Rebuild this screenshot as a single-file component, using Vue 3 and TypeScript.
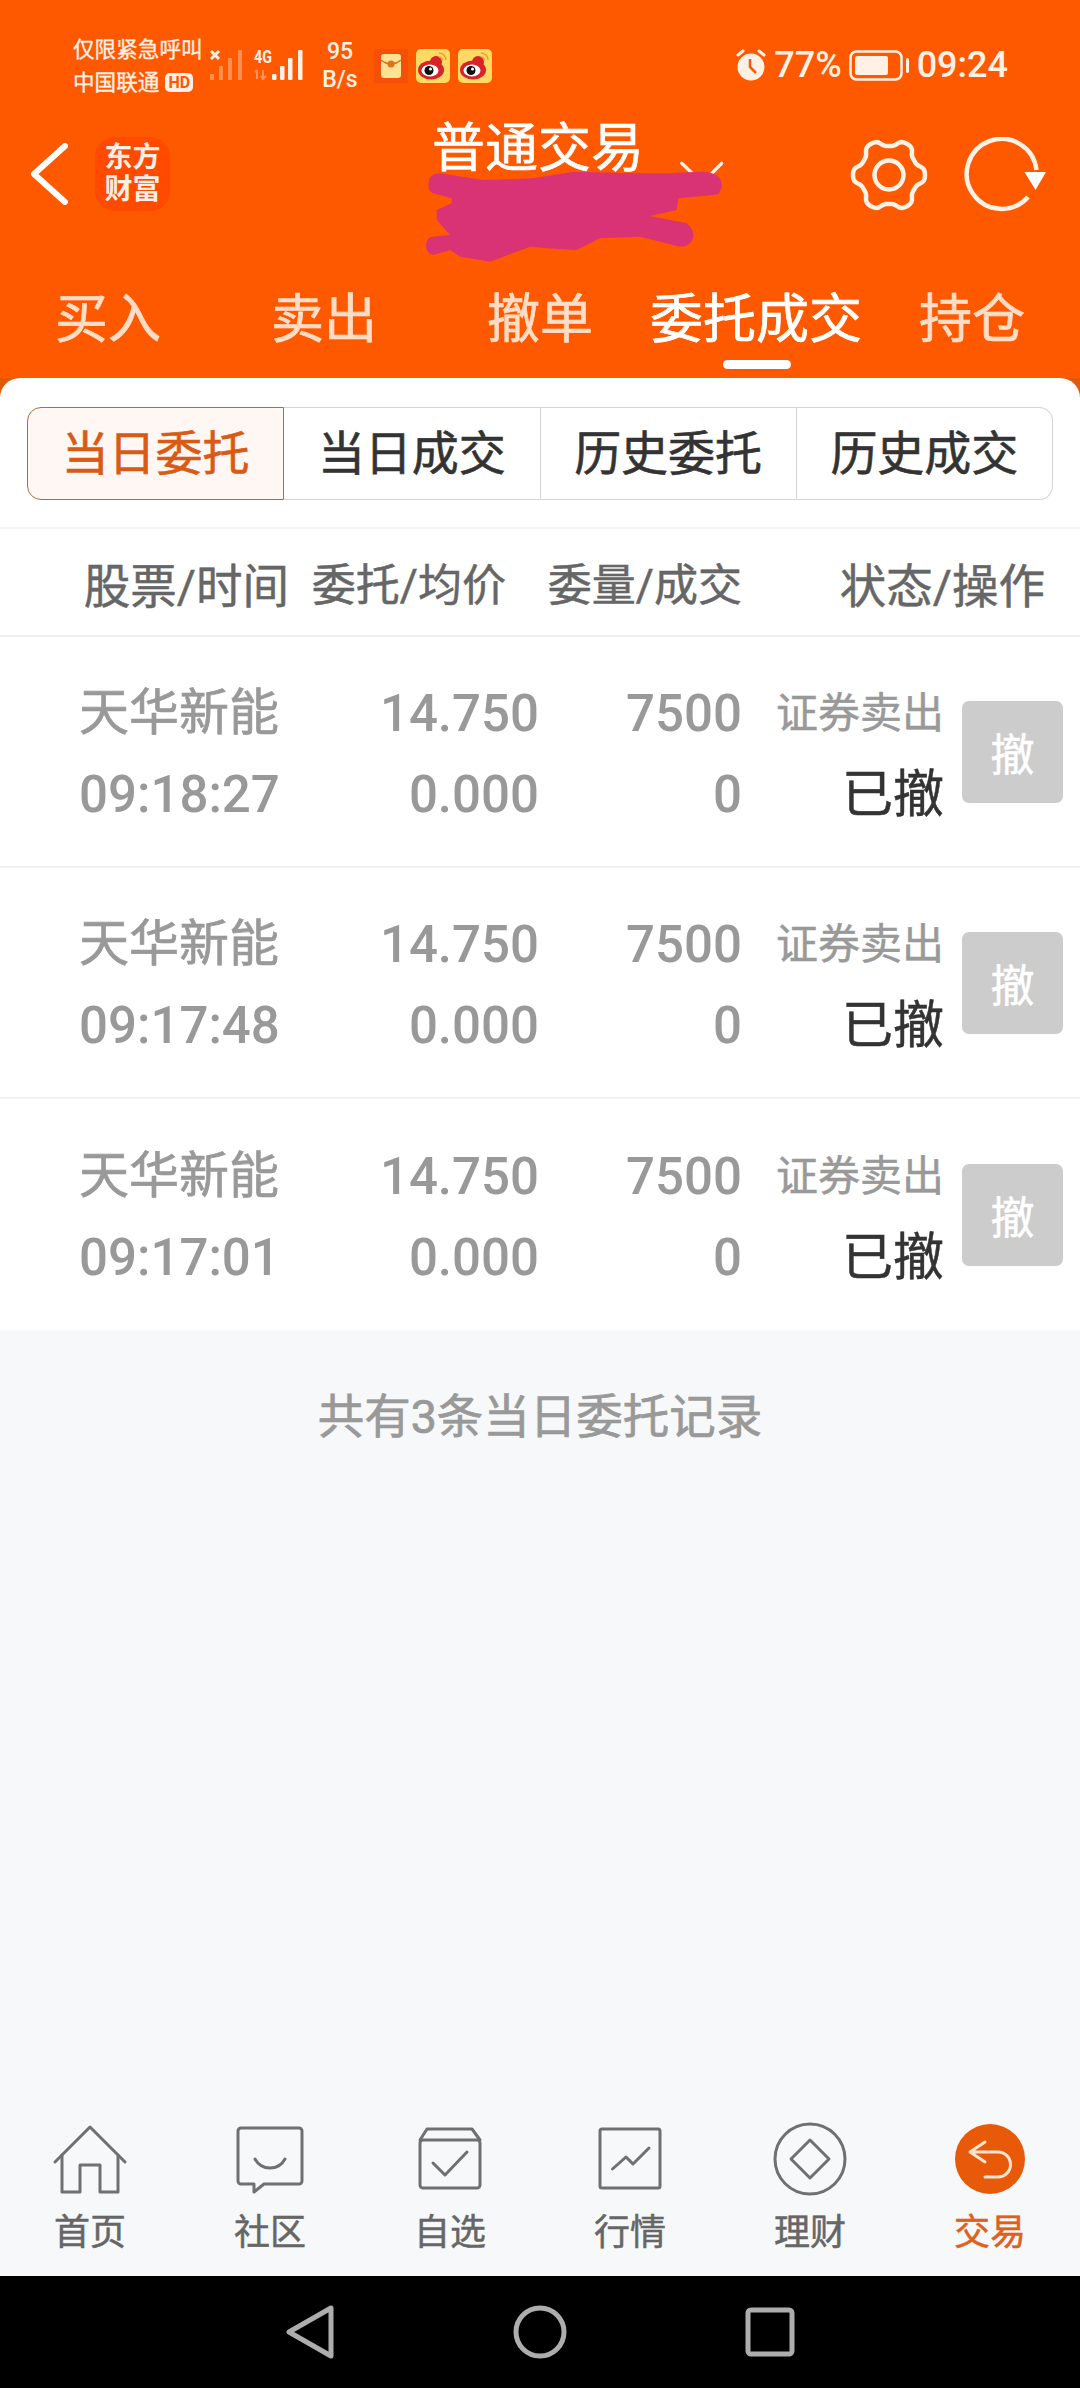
<template>
    <div class="page">
        <header class="head">
            <!-- system status bar -->
            <div class="statusbar">
                <div class="carrier">
                    <span>仅限紧急呼叫</span>
                    <span class="carrier-line">中国联通<i class="hd">HD</i></span>
                </div>
                <svg class="signal" width="94" height="32" viewBox="0 0 94 32">
                    <path class="signal-x" d="M1 2l8 8M9 2l-8 8" />
                    <g opacity="0.35">
                        <rect x="0" y="25" width="4" height="6" />
                        <rect x="9" y="17" width="4" height="14" />
                        <rect x="18" y="9" width="4" height="22" />
                        <rect x="28" y="1" width="4" height="30" />
                    </g>
                    <text x="44" y="14" font-size="18" font-weight="700" textLength="18" lengthAdjust="spacingAndGlyphs">4G</text>
                    <path opacity="0.4" class="signal-arrows" d="M47 21v9M45 23l2-2M53 21v9M51 27l2 3 3-3" />
                    <rect x="62" y="25" width="4.5" height="6" rx="1" />
                    <rect x="70" y="17" width="4.5" height="14" rx="1" />
                    <rect x="78" y="9" width="4.5" height="22" rx="1" />
                    <rect x="88" y="1" width="4.5" height="30" rx="1" />
                </svg>
                <div class="speed">
                    <span>95</span>
                    <span>B/s</span>
                </div>
                <div class="apps">
                    <svg width="34" height="34" viewBox="0 0 34 34">
                        <rect width="34" height="34" fill="#f5500a" />
                        <rect x="7" y="5" width="20" height="24" rx="3" fill="#ffe292" />
                        <path d="M7 11q10 8 20 0" fill="none" stroke="#d9691c" stroke-width="1.5" />
                        <circle cx="17" cy="15" r="3.5" fill="#e0701c" />
                    </svg>
                    <svg v-for="n in 2" :key="n" width="34" height="34" viewBox="0 0 34 34">
                        <rect width="34" height="34" rx="5" fill="#ffd964" />
                        <ellipse cx="15" cy="21" rx="13" ry="9.5" fill="#d8232a" />
                        <circle cx="20" cy="13" r="6" fill="#d8232a" />
                        <ellipse cx="14" cy="21.5" rx="8.5" ry="6" fill="#fff" />
                        <circle cx="13" cy="21.5" r="4.5" fill="#111" />
                        <circle cx="14.5" cy="20" r="1.5" fill="#fff" />
                        <path d="M23 4a7 7 0 0 1 7 7M23 8a3.5 3.5 0 0 1 3.5 3.5" fill="none" stroke="#eba52e" stroke-width="1.6" />
                    </svg>
                </div>
                <div class="status-right">
                    <svg width="30" height="32" viewBox="0 0 30 32">
                        <circle cx="15" cy="18" r="13.5" fill="#fff1e6" />
                        <path class="alarm-hand" d="M14 10v8l6 6" />
                        <path class="alarm-bell" d="M2 6l5-4M28 6l-5-4" />
                    </svg>
                    <span class="percent">77%</span>
                    <svg class="battery" width="60" height="31" viewBox="0 0 60 31">
                        <rect x="1.5" y="1.5" width="51" height="28" rx="6" fill="none" stroke="#fff1e6" stroke-width="2.5" />
                        <rect x="6" y="6" width="33" height="19" rx="2" fill="#fff1e6" />
                        <rect x="57" y="8" width="3" height="15" rx="1.5" fill="#fff1e6" />
                    </svg>
                    <span class="clock">09:24</span>
                </div>
            </div>

            <!-- title row -->
            <div class="navbar">
                <div class="nav-left">
                    <svg width="38" height="62" viewBox="0 0 38 62">
                        <path class="back" d="M35 3L4 31l31 28" />
                    </svg>
                    <div class="logo">东方<br />财富</div>
                </div>
                <div class="title">普通交易</div>
                <div class="nav-right">
                    <svg class="tool" width="80" height="76" viewBox="0 0 80 76">
                        <path :d="gearPath" />
                        <circle cx="40" cy="38" r="14.5" />
                    </svg>
                    <svg class="tool" width="90" height="76" viewBox="0 0 90 76">
                        <path d="M64 60A35 35 0 1 1 72.5 33" />
                        <path class="tool-head" d="M60.5 35H82L71.5 53z" />
                    </svg>
                </div>
                <!-- account name is painted over -->
                <svg class="account" width="340" height="140" viewBox="0 0 1020 420">
                    <path class="account-arrow" d="M845 100l30 28M965 100l-30 30" />
                    <path class="account-mask" d="M85 165Q85 130 120 130L250 150 400 145 520 125 700 130 800 130 900 125Q965 125 965 165 965 195 940 195L835 205 830 240 750 258 860 280Q880 295 880 320 875 350 840 350L720 320 600 325 530 360 440 355 390 350 270 395 180 380 150 360 100 375Q78 370 78 345 80 320 100 320L150 315 110 270 110 240 155 220 155 205 100 190Q85 185 85 165Z" />
                </svg>
            </div>

            <nav class="tabs">
                <div v-for="tab in tabs" :key="tab" class="tab" :class="{ 'tab--on': tab === '委托成交' }">
                    {{ tab }}
                </div>
            </nav>
        </header>

        <main class="body">
            <section class="card">
                <div class="seg">
                    <div v-for="(item, i) in segments" :key="item" class="seg-item" :class="{ 'seg-item--on': i === 0 }">
                        {{ item }}
                    </div>
                </div>

                <div class="thead">
                    <span class="th th--big">股票/时间</span>
                    <span class="th">委托/均价</span>
                    <span class="th">委量/成交</span>
                    <span class="th th--big">状态/操作</span>
                </div>

                <div v-for="row in orders" :key="row.time" class="row">
                    <div class="cell cell--name">
                        <span class="name">{{ row.name }}</span>
                        <span class="num">{{ row.time }}</span>
                    </div>
                    <div class="cell num">
                        <span>{{ row.price }}</span>
                        <span>{{ row.avg }}</span>
                    </div>
                    <div class="cell num">
                        <span>{{ row.volume }}</span>
                        <span>{{ row.filled }}</span>
                    </div>
                    <div class="cell">
                        <span class="kind">{{ row.kind }}</span>
                        <span class="state">{{ row.state }}</span>
                    </div>
                    <button class="cancel" type="button">撤</button>
                </div>
            </section>
            <p class="total">共有3条当日委托记录</p>
        </main>

        <footer class="bottom">
            <div class="bottom-item">
                <svg class="ico" width="80" height="80" viewBox="0 0 80 80">
                    <path d="M5 42L40 7l35 35" />
                    <path d="M12 35v37h18V45h20v27h18V35" />
                </svg>
                <span>首页</span>
            </div>
            <div class="bottom-item">
                <svg class="ico" width="80" height="80" viewBox="0 0 80 80">
                    <path d="M11 8h58a3 3 0 0 1 3 3v50a3 3 0 0 1-3 3H34l-10 8v-8H11a3 3 0 0 1-3-3V11a3 3 0 0 1 3-3z" />
                    <path d="M25 39a17 17 0 0 0 30 0" />
                </svg>
                <span>社区</span>
            </div>
            <div class="bottom-item">
                <svg class="ico" width="80" height="80" viewBox="0 0 80 80">
                    <rect x="10" y="20" width="60" height="48" rx="3" />
                    <path d="M10 20l7-11h45l8 11" />
                    <path d="M23 43l12 12 22-23" />
                </svg>
                <span>自选</span>
            </div>
            <div class="bottom-item">
                <svg class="ico" width="80" height="80" viewBox="0 0 80 80">
                    <rect x="10" y="9" width="60" height="59" rx="2" />
                    <path d="M22.5 49L36 37l7 7 16-16" />
                </svg>
                <span>行情</span>
            </div>
            <div class="bottom-item">
                <svg class="ico" width="80" height="80" viewBox="0 0 80 80">
                    <circle cx="40" cy="39" r="35" />
                    <path d="M40 20l19 19-19 19-19-19z" />
                </svg>
                <span>理财</span>
            </div>
            <div class="bottom-item bottom-item--on">
                <svg class="ico ico--on" width="80" height="80" viewBox="0 0 80 80">
                    <circle class="ico-disc" cx="40" cy="39" r="35" />
                    <path d="M35 22L20 32l15 10M20 32h28a12.5 12.5 0 0 1 0 25H35" />
                </svg>
                <span>交易</span>
            </div>
        </footer>

        <!-- android navigation keys -->
        <div class="keys">
            <svg width="60" height="60" viewBox="0 0 60 60">
                <path d="M51 6v48L9 30z" />
            </svg>
            <svg width="60" height="60" viewBox="0 0 60 60">
                <circle cx="30" cy="30" r="24" />
            </svg>
            <svg width="60" height="60" viewBox="0 0 60 60">
                <rect x="8" y="8" width="44" height="44" rx="3" />
            </svg>
        </div>
    </div>
</template>

<script setup lang="ts">
interface OrderRow {
    name: string;
    time: string;
    price: string;
    avg: string;
    volume: string;
    filled: string;
    kind: string;
    state: string;
}

const tabs = ['买入', '卖出', '撤单', '委托成交', '持仓'];
const segments = ['当日委托', '当日成交', '历史委托', '历史成交'];

const orders: OrderRow[] = ['09:18:27', '09:17:48', '09:17:01'].map((time) => ({
    name: '天华新能',
    time,
    price: '14.750',
    avg: '0.000',
    volume: '7500',
    filled: '0',
    kind: '证券卖出',
    state: '已撤',
}));

// six-lobed outline for the settings button, flattened at the lobe tips
const gearPath = (() => {
    const points: string[] = [];
    for (let deg = 0; deg < 360; deg += 3) {
        const rad = (deg * Math.PI) / 180;
        const wave = Math.tanh(1.6 * Math.cos(6 * rad)) / Math.tanh(1.6);
        const r = 32.5 + 3.5 * wave;
        points.push(`${(40 + r * Math.cos(rad)).toFixed(2)} ${(38 + r * Math.sin(rad)).toFixed(2)}`);
    }
    return `M${points.join('L')}Z`;
})();
</script>

<style>
html,
body {
    margin: 0;
    background: #f7f8fa;
}
</style>

<style scoped>
.page {
    width: 1080px;
    height: 2388px;
    display: flex;
    flex-direction: column;
    overflow: hidden;
    font-family: Roboto, "Noto Sans CJK SC", sans-serif;
}

.head {
    flex: 0 0 auto;
    height: 378px;
    background: #ff5900;
    display: flex;
    flex-direction: column;
}

.statusbar {
    height: 118px;
    flex: 0 0 auto;
    box-sizing: border-box;
    padding: 33px 72px 0 73px;
    display: flex;
    align-items: flex-start;
    color: #fff1e6;
}

.carrier {
    flex: 0 0 137px;
    display: flex;
    flex-direction: column;
    font-size: 21.6px;
    line-height: 33px;
    white-space: nowrap;
    -webkit-text-stroke: 0.3px currentColor;
}

.carrier-line {
    display: flex;
    align-items: center;
}

.hd {
    margin-left: 6px;
    width: 28px;
    height: 19px;
    border-radius: 5px;
    background: #fff1e6;
    color: #ff5900;
    font-style: normal;
    font-weight: 700;
    font-size: 16px;
    line-height: 19px;
    text-align: center;
    -webkit-text-stroke: 0;
}

.signal {
    margin-top: 16px;
    fill: #fff1e6;
}

.signal-x {
    fill: none;
    stroke: #fff1e6;
    stroke-width: 3;
}

.signal-arrows {
    fill: none;
    stroke: #fff1e6;
    stroke-width: 2;
}

.speed {
    width: 40px;
    margin-left: 16px;
    display: flex;
    flex-direction: column;
    align-items: center;
    font-size: 23px;
    font-weight: 500;
    line-height: 28px;
    padding-top: 5px;
}

.apps {
    margin: 16px 0 0 14px;
    display: flex;
    gap: 8px;
}

.apps svg {
    display: block;
}

.status-right {
    margin-left: auto;
    margin-top: 13px;
    display: flex;
    align-items: center;
    font-size: 36px;
    font-weight: 500;
    line-height: 38px;
}

.alarm-hand {
    fill: none;
    stroke: #ff5900;
    stroke-width: 2.5;
}

.alarm-bell {
    fill: none;
    stroke: #fff1e6;
    stroke-width: 3;
    stroke-linecap: round;
}

.percent {
    margin-left: 8px;
}

.battery {
    margin-left: 7px;
}

.clock {
    margin-left: 8px;
}

.navbar {
    position: relative;
    height: 152px;
    flex: 0 0 auto;
    display: grid;
    grid-template-columns: 1fr auto 1fr;
    align-items: start;
}

.nav-left {
    margin-top: 19px;
    padding-left: 30px;
    display: flex;
    align-items: center;
    gap: 27px;
}

.back {
    fill: none;
    stroke: #fff;
    stroke-width: 6;
    stroke-linecap: round;
    stroke-linejoin: round;
}

.logo {
    flex: 0 0 75px;
    height: 74px;
    border-radius: 20px;
    background: #ff4a00;
    color: #ffeee4;
    font-size: 28px;
    font-weight: 700;
    line-height: 32px;
    text-align: center;
    padding-top: 5px;
    box-sizing: border-box;
}

.title {
    margin-right: 4px;
    padding-top: 5px;
    color: #fff;
    font-size: 53px;
    line-height: 52px;
    white-space: nowrap;
    -webkit-text-stroke: 0.6px currentColor;
}

.nav-right {
    margin-top: 19px;
    padding-right: 26px;
    display: flex;
    justify-content: flex-end;
    gap: 35px;
}

.tool {
    fill: none;
    stroke: #fff1e6;
    stroke-width: 4.5;
}

.tool-head {
    fill: #fff;
    stroke: none;
}

.account {
    position: absolute;
    left: 400px;
    top: 12px;
}

.account-arrow {
    fill: none;
    stroke: #fff1e6;
    stroke-width: 10;
    stroke-linecap: round;
}

.account-mask {
    fill: #d93376;
}

.tabs {
    flex: 1;
    display: flex;
}

.tab {
    position: relative;
    flex: 1;
    height: 108px;
    padding-top: 3px;
    box-sizing: border-box;
    text-align: center;
    color: #ffdcc5;
    font-size: 53px;
    line-height: 94px;
    white-space: nowrap;
    -webkit-text-stroke: 0.7px currentColor;
}

.tab--on {
    color: #fff;
}

.tab--on::after {
    content: "";
    position: absolute;
    left: 50%;
    bottom: 9px;
    width: 68px;
    height: 9px;
    margin-left: -33px;
    border-radius: 5px;
    background: #fff;
}

.body {
    flex: 1;
    background: linear-gradient(#e25a08 0 20px, #f7f8fa 20px);
    min-height: 0;
}

.card {
    background: #fff;
    border-radius: 20px 20px 0 0;
    padding-top: 29px;
}

.seg {
    height: 93px;
    margin: 0 27px;
    display: flex;
}

.seg-item {
    flex: 1;
    box-sizing: border-box;
    border: 1.5px solid #d4d4d4;
    border-left: none;
    color: #333;
    font-size: 47px;
    line-height: 92px;
    text-align: center;
    -webkit-text-stroke: 0.6px currentColor;
}

.seg-item:last-child {
    border-radius: 0 14px 14px 0;
}

.seg-item--on {
    border: 1.5px solid #b8683a;
    border-radius: 14px 0 0 14px;
    background: #fff7f3;
    color: #d95a14;
}

.thead {
    margin-top: 27px;
    height: 110px;
    box-sizing: border-box;
    border-top: 2px solid #f4f4f4;
    border-bottom: 2px solid #f0f0f0;
    padding-right: 35px;
    display: grid;
    grid-template-columns: 289px 217px 236px 303px;
    align-items: center;
    text-align: right;
}

.th {
    color: #666;
    font-size: 44px;
    white-space: nowrap;
    -webkit-text-stroke: 0.5px currentColor;
}

.th--big {
    font-size: 46.5px;
}

.row {
    height: 231px;
    box-sizing: border-box;
    border-bottom: 2px solid #f2f2f2;
    padding-left: 79px;
    display: grid;
    grid-template-columns: 211px 249px 203px 202px 101px;
    align-items: center;
}

.row:last-child {
    border-bottom: none;
}

.cell {
    display: flex;
    flex-direction: column;
    align-items: flex-end;
    color: #999;
    line-height: 81px;
    font-size: 50px;
    padding-top: 5px;
    white-space: nowrap;
}

.cell--name {
    align-items: flex-start;
}

.name {
    -webkit-text-stroke: 0.7px currentColor;
}

.num {
    font-size: 51px;
    font-weight: 500;
}

.kind {
    font-size: 42px;
    -webkit-text-stroke: 0.5px currentColor;
}

.state {
    color: #333;
    font-size: 51px;
    -webkit-text-stroke: 0.5px currentColor;
}

.cancel {
    width: 101px;
    height: 102px;
    margin-left: 18px;
    padding: 0;
    border: none;
    border-radius: 7px;
    background: #cccccc;
    color: #fff;
    font-family: inherit;
    font-size: 44px;
    -webkit-text-stroke: 0.5px currentColor;
}

.total {
    margin: 0;
    padding-top: 57px;
    color: #999;
    font-size: 46.5px;
    line-height: 60px;
    text-align: center;
    -webkit-text-stroke: 0.7px currentColor;
}

.bottom {
    flex: 0 0 auto;
    height: 156px;
    background: #f7f8fa;
    display: flex;
}

.bottom-item {
    flex: 1;
    display: flex;
    flex-direction: column;
    align-items: center;
    color: #666;
    font-size: 36px;
    line-height: 44px;
}

.bottom-item span {
    margin-top: 11px;
    -webkit-text-stroke: 0.5px currentColor;
}

.bottom-item--on {
    color: #e0601a;
}

.ico {
    display: block;
    fill: none;
    stroke: #707070;
    stroke-width: 3;
    stroke-linejoin: round;
    stroke-linecap: round;
}

.ico--on {
    stroke: #fde4cf;
}

.ico-disc {
    fill: #e85a0a;
    stroke: none;
}

.keys {
    flex: 0 0 auto;
    height: 112px;
    background: #000;
    display: flex;
    justify-content: center;
    align-items: center;
    gap: 170px;
}

.keys svg {
    fill: none;
    stroke: #adadad;
    stroke-width: 5;
    stroke-linejoin: round;
}
</style>
